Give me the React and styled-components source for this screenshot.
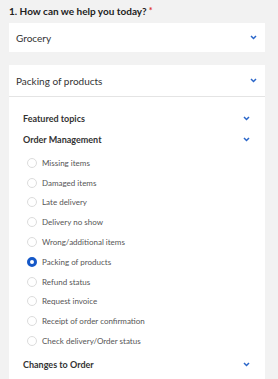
import React from 'react';
import styled, { createGlobalStyle } from 'styled-components';

const GlobalStyle = createGlobalStyle`
  body {
    margin: 0;
    background: #f2f2f2;
    font-family: Lato, "Open Sans", sans-serif;
  }
`;

const Wrapper = styled.div`
  width: 256px;
  padding: 3px 0 0 9px;
`;

const Label = styled.div`
  font-size: 10px;
  line-height: 16px;
  font-weight: 700;
  color: #222;
  margin-bottom: 4px;
  span {
    color: #e0322d;
    font-size: 9px;
    vertical-align: top;
    margin-left: 2px;
  }
`;

const Select = styled.div`
  height: 29px;
  background: #fff;
  display: flex;
  align-items: center;
  justify-content: space-between;
  padding: 0 8px 0 7px;
  font-size: 10px;
  color: #333;
`;

const Panel = styled.div`
  margin-top: 13px;
  background: #fff;
  min-height: 320px;
`;

const PanelHead = styled(Select)`
  height: 31px;
  border-bottom: 1px solid #e4e4e4;
`;

const PanelBody = styled.div`
  padding: 11px 15px 0 14px;
`;

const Heading = styled.div`
  height: 21px;
  display: flex;
  align-items: center;
  justify-content: space-between;
  font-size: 9px;
  font-weight: 700;
  color: #333;
  margin-top: ${p => (p.$gap ? '3px' : '0')};
`;

const List = styled.div`
  padding: 3px 0 0 4px;
`;

const Item = styled.label`
  height: 19.8px;
  display: flex;
  align-items: center;
  gap: 5px;
  font-size: 8px;
  color: #555;
`;

const Radio = styled.span`
  width: 10px;
  height: 10px;
  box-sizing: border-box;
  border-radius: 50%;
  border: ${p => (p.$on ? '3px solid #1558c8' : '1px solid #dcdcdc')};
  background: #fff;
`;

const Chevron = () => (
  <svg width="7" height="5" viewBox="0 0 7 5">
    <path d="M1 1l2.5 2.5L6 1" fill="none" stroke="#2a66c9" strokeWidth="1.5" />
  </svg>
);

const items = [
  'Missing items',
  'Damaged items',
  'Late delivery',
  'Delivery no show',
  'Wrong/additional items',
  'Packing of products',
  'Refund status',
  'Request invoice',
  'Receipt of order confirmation',
  'Check delivery/Order status',
];

export default function App() {
  return (
    <Wrapper>
      <GlobalStyle />
      <Label>
        1. How can we help you today?<span>*</span>
      </Label>
      <Select>
        Grocery
        <Chevron />
      </Select>
      <Panel>
        <PanelHead>
          Packing of products
          <Chevron />
        </PanelHead>
        <PanelBody>
          <Heading>
            Featured topics
            <Chevron />
          </Heading>
          <Heading>
            Order Management
            <Chevron />
          </Heading>
          <List>
            {items.map(t => (
              <Item key={t}>
                <Radio $on={t === 'Packing of products'} />
                {t}
              </Item>
            ))}
          </List>
          <Heading $gap>
            Changes to Order
            <Chevron />
          </Heading>
        </PanelBody>
      </Panel>
    </Wrapper>
  );
}
